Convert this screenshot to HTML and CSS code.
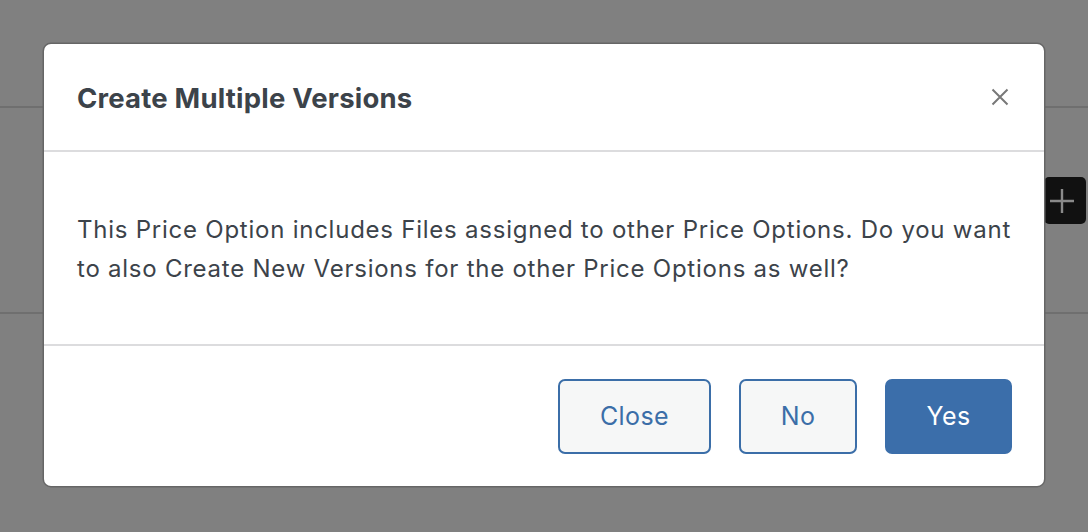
FILE: index.html
```html
<!DOCTYPE html>
<html>
<head>
<meta charset="utf-8">
<link rel="stylesheet" href="styles.css">
</head>
<body>
<div class="page">
  <div class="row row-top"></div>
  <div class="row row-mid">
    <div class="add-btn"><svg width="24" height="24" viewBox="0 0 24 24"><path d="M12 0v24M0 12h24" stroke="#8a8a8a" stroke-width="2.4" fill="none"/></svg></div>
  </div>
  <div class="row row-bottom"></div>
</div>
<div class="modal">
  <div class="modal-header">
    <h1 class="modal-title">Create Multiple Versions</h1>
    <button class="modal-close" aria-label="Close"><svg width="18" height="18" viewBox="0 0 18 18"><path d="M1.5 1.5l15 15M16.5 1.5l-15 15" stroke="#787878" stroke-width="2" fill="none"/></svg></button>
  </div>
  <div class="modal-body">
    <p>This Price Option includes Files assigned to other Price Options. Do you want to also Create New Versions for the other Price Options as well?</p>
  </div>
  <div class="modal-footer">
    <button class="btn btn-secondary btn-close">Close</button>
    <button class="btn btn-secondary btn-no">No</button>
    <button class="btn btn-primary btn-yes">Yes</button>
  </div>
</div>
</body>
</html>
```
FILE: styles.css
```css
html, body {
  margin: 0;
  padding: 0;
  width: 1088px;
  height: 532px;
  overflow: hidden;
  background: #808080;
  font-family: Inter, "Noto Sans", "Liberation Sans", sans-serif;
}
.page {
  display: flex;
  flex-direction: column;
}
.row {
  box-sizing: border-box;
}
.row-top {
  height: 108px;
  border-bottom: 2px solid #6f6f6f;
}
.row-mid {
  height: 206px;
  border-bottom: 2px solid #6f6f6f;
  display: flex;
  justify-content: flex-end;
  padding-top: 69px;
  padding-right: 2px;
}
.add-btn {
  width: 42px;
  height: 47px;
  background: #111111;
  border-radius: 5px;
  display: flex;
  align-items: center;
  justify-content: center;
}
.add-btn svg { margin-left: -6px; }
.modal {
  position: absolute;
  left: 44px;
  top: 44px;
  width: 1000px;
  height: 442px;
  background: #ffffff;
  border-radius: 7px;
  box-shadow: 0 0 0 1.5px #666666;
  display: flex;
  flex-direction: column;
  overflow: hidden;
}
.modal-header {
  height: 106px;
  border-bottom: 2px solid #dcdcde;
  display: flex;
  align-items: center;
  justify-content: space-between;
  padding: 0 35px 0 33px;
  flex: none;
}
.modal-title {
  margin: 0;
  font-size: 27.5px;
  font-weight: 700;
  color: #3c434a;
  letter-spacing: 0.2px;
  padding-top: 2px;
}
.modal-close {
  border: 0;
  background: none;
  padding: 0;
  width: 18px;
  height: 18px;
  display: flex;
}
.modal-body {
  height: 194px;
  border-bottom: 2px solid #dcdcde;
  padding: 0 33px;
  display: flex;
  align-items: center;
  flex: none;
  box-sizing: border-box;
}
.modal-body p {
  margin: 0;
  font-size: 24px;
  line-height: 39px;
  color: #3c434a;
  padding-top: 2px;
  letter-spacing: 0.76px;
}
.modal-footer {
  flex: 1;
  display: flex;
  justify-content: flex-end;
  align-items: center;
  gap: 28px;
  padding: 0 32px 0 0;
}
.btn {
  height: 75px;
  border-radius: 7px;
  font-family: inherit;
  font-size: 25px;
  letter-spacing: 0.4px;
  box-sizing: border-box;
  cursor: pointer;
  padding: 0;
}
.btn-secondary {
  background: #f6f7f7;
  border: 2px solid #3b6ea8;
  color: #3b6ea8;
}
.btn-primary {
  background: #3b6eaa;
  border: 2px solid #3b6eaa;
  color: #ffffff;
}
.btn-close { width: 153px; }
.btn-no { width: 118px; }
.btn-yes { width: 127px; }
```
